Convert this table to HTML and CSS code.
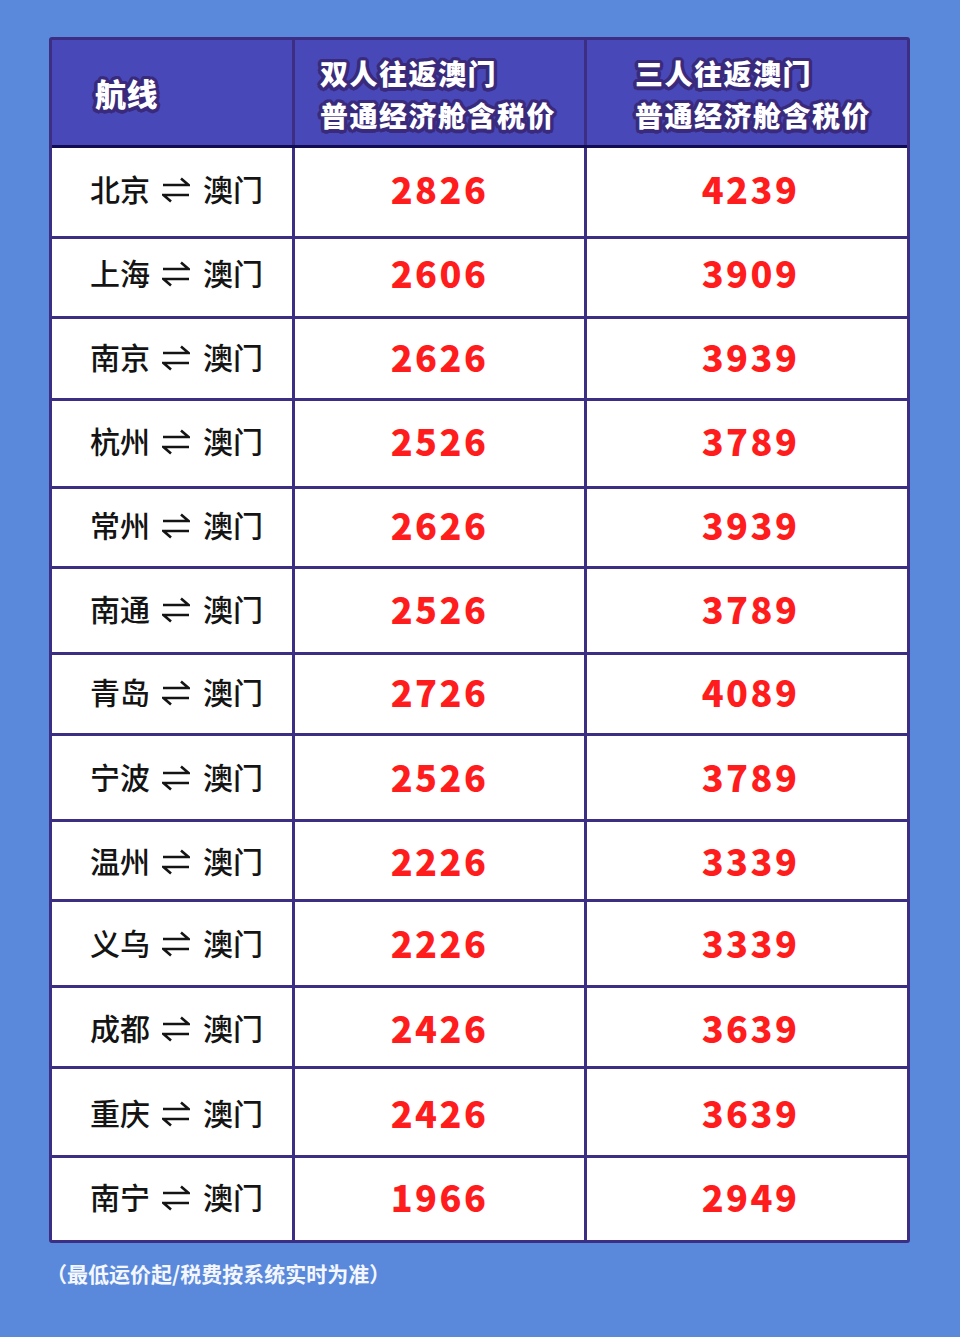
FILE: index.html
```html
<!DOCTYPE html>
<html lang="zh-CN">
<head>
<meta charset="utf-8">
<title>澳门往返价格</title>
<link rel="stylesheet" href="styles.css">
</head>
<body>
<main class="page">
  <div class="table">
    <div class="row head">
      <div class="cell c1"><span class="htext big">航线</span></div>
      <div class="cell c2"><span class="htext">双人往返澳门<br>普通经济舱含税价</span></div>
      <div class="cell c3"><span class="htext">三人往返澳门<br>普通经济舱含税价</span></div>
    </div>
    <div class="row body r1"><div class="cell c1 route"><span>北京</span><svg class="arr" viewBox="0 0 28 26" aria-label="⇌"><path d="M1 8H26.5L19 1.5M27 18H1.5L9 24.5"/></svg><span>澳门</span></div><div class="cell c2 num">2826</div><div class="cell c3 num">4239</div></div>
    <div class="row body r2"><div class="cell c1 route"><span>上海</span><svg class="arr" viewBox="0 0 28 26" aria-label="⇌"><path d="M1 8H26.5L19 1.5M27 18H1.5L9 24.5"/></svg><span>澳门</span></div><div class="cell c2 num">2606</div><div class="cell c3 num">3909</div></div>
    <div class="row body r3"><div class="cell c1 route"><span>南京</span><svg class="arr" viewBox="0 0 28 26" aria-label="⇌"><path d="M1 8H26.5L19 1.5M27 18H1.5L9 24.5"/></svg><span>澳门</span></div><div class="cell c2 num">2626</div><div class="cell c3 num">3939</div></div>
    <div class="row body r4"><div class="cell c1 route"><span>杭州</span><svg class="arr" viewBox="0 0 28 26" aria-label="⇌"><path d="M1 8H26.5L19 1.5M27 18H1.5L9 24.5"/></svg><span>澳门</span></div><div class="cell c2 num">2526</div><div class="cell c3 num">3789</div></div>
    <div class="row body r5"><div class="cell c1 route"><span>常州</span><svg class="arr" viewBox="0 0 28 26" aria-label="⇌"><path d="M1 8H26.5L19 1.5M27 18H1.5L9 24.5"/></svg><span>澳门</span></div><div class="cell c2 num">2626</div><div class="cell c3 num">3939</div></div>
    <div class="row body r6"><div class="cell c1 route"><span>南通</span><svg class="arr" viewBox="0 0 28 26" aria-label="⇌"><path d="M1 8H26.5L19 1.5M27 18H1.5L9 24.5"/></svg><span>澳门</span></div><div class="cell c2 num">2526</div><div class="cell c3 num">3789</div></div>
    <div class="row body r7"><div class="cell c1 route"><span>青岛</span><svg class="arr" viewBox="0 0 28 26" aria-label="⇌"><path d="M1 8H26.5L19 1.5M27 18H1.5L9 24.5"/></svg><span>澳门</span></div><div class="cell c2 num">2726</div><div class="cell c3 num">4089</div></div>
    <div class="row body r8"><div class="cell c1 route"><span>宁波</span><svg class="arr" viewBox="0 0 28 26" aria-label="⇌"><path d="M1 8H26.5L19 1.5M27 18H1.5L9 24.5"/></svg><span>澳门</span></div><div class="cell c2 num">2526</div><div class="cell c3 num">3789</div></div>
    <div class="row body r9"><div class="cell c1 route"><span>温州</span><svg class="arr" viewBox="0 0 28 26" aria-label="⇌"><path d="M1 8H26.5L19 1.5M27 18H1.5L9 24.5"/></svg><span>澳门</span></div><div class="cell c2 num">2226</div><div class="cell c3 num">3339</div></div>
    <div class="row body r10"><div class="cell c1 route"><span>义乌</span><svg class="arr" viewBox="0 0 28 26" aria-label="⇌"><path d="M1 8H26.5L19 1.5M27 18H1.5L9 24.5"/></svg><span>澳门</span></div><div class="cell c2 num">2226</div><div class="cell c3 num">3339</div></div>
    <div class="row body r11"><div class="cell c1 route"><span>成都</span><svg class="arr" viewBox="0 0 28 26" aria-label="⇌"><path d="M1 8H26.5L19 1.5M27 18H1.5L9 24.5"/></svg><span>澳门</span></div><div class="cell c2 num">2426</div><div class="cell c3 num">3639</div></div>
    <div class="row body r12"><div class="cell c1 route"><span>重庆</span><svg class="arr" viewBox="0 0 28 26" aria-label="⇌"><path d="M1 8H26.5L19 1.5M27 18H1.5L9 24.5"/></svg><span>澳门</span></div><div class="cell c2 num">2426</div><div class="cell c3 num">3639</div></div>
    <div class="row body r13"><div class="cell c1 route"><span>南宁</span><svg class="arr" viewBox="0 0 28 26" aria-label="⇌"><path d="M1 8H26.5L19 1.5M27 18H1.5L9 24.5"/></svg><span>澳门</span></div><div class="cell c2 num">1966</div><div class="cell c3 num">2949</div></div>
  </div>
  <p class="note">（最低运价起/税费按系统实时为准）</p>
</main>
</body>
</html>
```

FILE: styles.css
```css
* { box-sizing: border-box; }

html, body {
  margin: 0;
  padding: 0;
  background: #5a89db;
}

body {
  font-family: "Noto Sans CJK SC", "Noto Sans", sans-serif;
  width: 960px;
  min-height: 1337px;
}

.page {
  padding: 37px 0 0 49px;
}

.table {
  width: 861px;
  border: 3px solid #3c2e82;
  border-radius: 3px;
  background: #ffffff;
  overflow: hidden;
}

.row {
  display: grid;
  grid-template-columns: 243px 292px 1fr;
  border-bottom: 3px solid #3c2e82;
  --dy: 0px;
}

.row:last-child { border-bottom: none; }

.cell {
  display: flex;
  align-items: center;
}

.body .cell { padding-bottom: calc(var(--dy) * -2); }

.c1, .c2 { border-right: 3px solid #3c2e82; }

.head {
  height: 108px;
  background: #4848b8;
  border-bottom-color: #120c52;
}

.htext {
  color: #ffffff;
  font-weight: 900;
  font-size: 28px;
  line-height: 42px;
  letter-spacing: 1.5px;
  text-shadow:
    3.5px 0 0 #3a2a7c, -3.5px 0 0 #3a2a7c, 0 3.5px 0 #3a2a7c, 0 -3.5px 0 #3a2a7c,
    2.5px 2.5px 0 #3a2a7c, -2.5px 2.5px 0 #3a2a7c, 2.5px -2.5px 0 #3a2a7c, -2.5px -2.5px 0 #3a2a7c,
    3px 1.5px 0 #3a2a7c, -3px 1.5px 0 #3a2a7c, 3px -1.5px 0 #3a2a7c, -3px -1.5px 0 #3a2a7c,
    1.5px 3px 0 #3a2a7c, -1.5px 3px 0 #3a2a7c, 1.5px -3px 0 #3a2a7c, -1.5px -3px 0 #3a2a7c,
    0 0 3px #3a2a7c;
}

.htext.big {
  font-size: 31px;
  letter-spacing: 0.5px;
}

.head .c1 { padding-left: 43px; }
.head .c2 { padding-left: 25px; padding-top: 2px; }
.head .c3 { padding-left: 48px; padding-top: 2px; }

.route {
  padding-left: 38px;
  font-size: 30px;
  font-weight: 500;
  color: #141414;
  line-height: 1;
}

.arr {
  width: 28px;
  height: 26px;
  margin: 4px 13px 0 12px;
  fill: none;
  stroke: #141414;
  stroke-width: 2.6;
}

.num {
  justify-content: center;
  color: #ff1c1c;
  font-weight: 900;
  font-size: 36px;
  letter-spacing: 2.5px;
  line-height: 1;
}

.c3.num { padding-left: 7px; }

.r1 { height: 91px; --dy: -4.5px; }
.r2 { height: 80px; --dy: -6px; }
.r3 { height: 82px; --dy: -3px; }
.r4 { height: 88px; --dy: -4px; }
.r5 { height: 80px; --dy: -4px; }
.r6 { height: 86px; --dy: -3px; }
.r7 { height: 81px; --dy: -3px; }
.r8 { height: 86px; --dy: -2px; }
.r9 { height: 80px; --dy: -1px; }
.r10 { height: 86px; --dy: -1.5px; }
.r11 { height: 81px; --dy: 0px; }
.r12 { height: 89px; --dy: -0.5px; }
.r13 { height: 82px; --dy: -3.5px; }

.note {
  margin: 17px 0 0 -3px;
  color: #f4f7ff;
  font-size: 21px;
  font-weight: 700;
  line-height: 26px;
}
```
